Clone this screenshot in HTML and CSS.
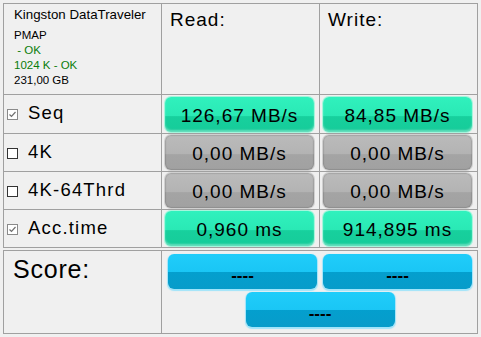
FILE: index.html
```html
<!DOCTYPE html>
<html lang="en">
<head>
  <meta charset="UTF-8">
  <title>AS SSD Benchmark</title>
  <link rel="stylesheet" href="styles.css">
</head>
<body>
  <div class="results">
    <!-- header row -->
    <div class="cell drive">
      <div class="drive-name">Kingston DataTraveler</div>
      <div class="drive-line first">PMAP</div>
      <div class="drive-line ok">&nbsp;- OK</div>
      <div class="drive-line ok">1024 K - OK</div>
      <div class="drive-line">231,00 GB</div>
    </div>
    <div class="cell head">Read:</div>
    <div class="cell head">Write:</div>

    <!-- Seq -->
    <div class="cell label"><span class="box checked"><svg width="11" height="11" viewBox="0 0 11 11"><path d="M2.5 5.5 L4.5 7.5 L8.5 3" fill="none" stroke="#707070" stroke-width="1.2"/></svg></span>Seq</div>
    <div class="cell val"><div class="btn green">126,67 MB/s</div></div>
    <div class="cell val"><div class="btn green">84,85 MB/s</div></div>

    <!-- 4K -->
    <div class="cell label"><span class="box"></span>4K</div>
    <div class="cell val"><div class="btn gray">0,00 MB/s</div></div>
    <div class="cell val"><div class="btn gray">0,00 MB/s</div></div>

    <!-- 4K-64Thrd -->
    <div class="cell label"><span class="box"></span>4K-64Thrd</div>
    <div class="cell val"><div class="btn gray">0,00 MB/s</div></div>
    <div class="cell val"><div class="btn gray">0,00 MB/s</div></div>

    <!-- Acc.time -->
    <div class="cell label"><span class="box checked"><svg width="11" height="11" viewBox="0 0 11 11"><path d="M2.5 5.5 L4.5 7.5 L8.5 3" fill="none" stroke="#707070" stroke-width="1.2"/></svg></span>Acc.time</div>
    <div class="cell val"><div class="btn green">0,960 ms</div></div>
    <div class="cell val"><div class="btn green">914,895 ms</div></div>
  </div>

  <div class="score">
    <div class="score-label">Score:</div>
    <div class="score-btns">
      <div class="btn blue">----</div>
      <div class="btn blue">----</div>
      <div class="btn blue total">----</div>
    </div>
  </div>
</body>
</html>
```

FILE: styles.css
```css
body { margin: 0; background: #f0f0f0; color: #000; font-family: "Liberation Sans", Arial, sans-serif; }

.results { display: grid; grid-template-columns: 157px 157px 157px; grid-template-rows: 90px 38px 37px 37px 37px; gap: 1px; background: #a0a0a0; border: 1px solid #a0a0a0; width: 473px; margin: 3px 0 0 3px; }
.cell { background: #f0f0f0; }

.drive { padding: 3px 0 0 10px; }
.drive-name { font-size: 13.3px; line-height: 16px; }
.drive-line { font-size: 11.5px; line-height: 15px; }
.drive-line.first { margin-top: 5px; }
.ok { color: #0a7d0a; }

.head { font-size: 19px; letter-spacing: 1px; padding: 5px 0 0 8px; }

.label { display: flex; align-items: center; font-size: 18.5px; letter-spacing: 1.2px; padding: 0 0 2px 3px; }
.box { width: 11px; height: 11px; box-sizing: border-box; border: 1px solid #333; background: #fff; margin: 3px 10px 0 0; display: inline-block; position: relative; }
.box.checked { border-color: #8a8a8a; }
.box svg { position: absolute; left: -1px; top: -1px; }

.val { display: flex; align-items: center; padding-left: 3px; }

.btn { width: 149px; height: 35px; box-sizing: border-box; border-radius: 6px; display: flex; align-items: center; justify-content: center; font-size: 19px; letter-spacing: 1px; padding-top: 3px; }
.green { background: linear-gradient(#30f1bd 0%, #2ae9b5 54%, #17d09d 56%, #16cc9a 100%); box-shadow: 0 0 0 1px #a6f5dc, inset 0 -2px 2px rgba(255,255,255,0.35); }
.gray { background: linear-gradient(#bbbbbb 0%, #b3b3b3 54%, #a4a4a4 56%, #a1a1a1 100%); box-shadow: 0 0 0 1px #d0d0d0, inset 0 0 1px 1px rgba(0,0,0,0.12); }
.blue { background: linear-gradient(#20cdfa 0%, #1ac6f5 50%, #049fce 50%, #079cca 100%); box-shadow: 0 1px 1px 1px #9fe4fa; font-size: 17px; font-weight: bold; letter-spacing: 0; padding-top: 8px; }

.score { display: flex; width: 473px; height: 82px; border: 1px solid #a0a0a0; margin: 2px 0 0 3px; }
.score-label { width: 158px; border-right: 1px solid #a0a0a0; font-size: 25px; letter-spacing: 0.8px; padding: 4px 0 0 9px; box-sizing: border-box; }
.score-btns { flex: 1; display: flex; flex-wrap: wrap; justify-content: center; gap: 3px 6px; padding: 3px 0 0 1px; align-content: flex-start; }
.score-btns .btn { width: 149px; height: 35px; }
```
